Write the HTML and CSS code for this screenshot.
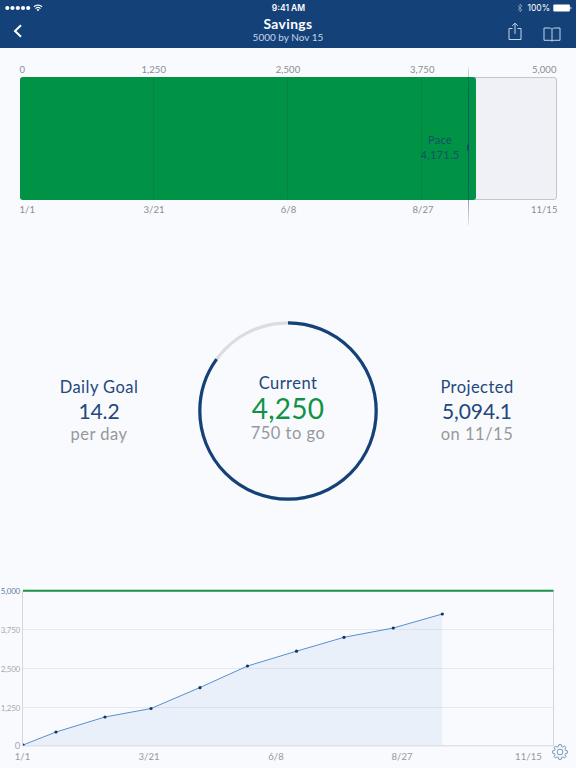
FILE: index.html
```html
<!DOCTYPE html>
<html lang="en">

<head>
    <meta charset="UTF-8">
    <meta name="viewport" content="width=device-width, initial-scale=1.0">
    <title>Savings</title>
    <link rel="stylesheet" href="styles.css">
</head>

<body>
    <header id="head">
        <div class="status">
            <svg class="signal" width="40" height="10" viewBox="0 0 40 10" fill="#fff">
                <circle cx="2.3" cy="5" r="2.1" />
                <circle cx="7.5" cy="5" r="2.1" />
                <circle cx="12.8" cy="5" r="2.1" />
                <circle cx="18" cy="5" r="2.1" />
                <circle cx="23.2" cy="5" r="2.1" />
                <g fill="none" stroke="#fff" stroke-width="1.2">
                    <path d="M28.9 3.8a6 6 0 0 1 8.2 0" />
                    <path d="M30.5 5.6a3.7 3.7 0 0 1 5 0" />
                </g>
                <path d="M31.6 6.7a2.1 2.1 0 0 1 2.8 0L33 8.2z" />
            </svg>
            <span class="time">9:41 AM</span>
            <div class="power">
                <svg width="6" height="10" viewBox="0 0 6 10" fill="none" stroke="#8ba3c2" stroke-width=".8">
                    <path d="M.8 2.8l4.2 4.3L3 9V1l2 1.9L.8 7.2" />
                </svg>
                <span>100%</span>
                <svg width="19" height="8" viewBox="0 0 19 8" fill="#fff">
                    <rect x=".3" y=".5" width="16.6" height="7" rx="1" />
                    <path d="M17.5 2.7q1.1.3 1.1 1.3t-1.1 1.3z" />
                </svg>
            </div>
        </div>
        <div class="nav">
            <svg class="back" width="10" height="14" viewBox="0 0 10 14" fill="none" stroke="#fff" stroke-width="2">
                <path d="M8 1.2L2 7l6 5.8" />
            </svg>
            <div class="title">
                <h1>Savings</h1>
                <p>5000 by Nov 15</p>
            </div>
            <div class="actions">
                <svg width="14" height="19" viewBox="0 0 14 19" fill="none" stroke="#c6d4e6" stroke-width="1">
                    <path d="M4.5 6.5H1v11h12v-11H9.5M7 12V1.2M4.2 3.9L7 1.1l2.8 2.8" />
                </svg>
                <svg width="18" height="15" viewBox="0 0 18 15" fill="none" stroke="#c6d4e6" stroke-width="1">
                    <path d="M9 2.3C8.5 1.3 7.5 1 6.3 1H1v12.3h5.8c1.2 0 1.8.2 2.2.9.4-.7 1-.9 2.2-.9H17V1h-5.3C10.5 1 9.500 1.300 9 2.300v12" />
                </svg>
            </div>
        </div>
    </header>

    <section class="progress">
        <div class="labels">
            <span>0</span><span>1,250</span><span>2,500</span><span>3,750</span><span>5,000</span>
        </div>
        <div class="bar">
            <div class="fill" style="width: 85.3%"></div>
            <div class="ticks"><i></i><i></i><i></i><i></i></div>
            <div class="pace">
                <p>Pace<br>4,171.5</p>
            </div>
        </div>
        <div class="labels dates">
            <span>1/1</span><span>3/21</span><span>6/8</span><span>8/27</span><span>11/15</span>
        </div>
    </section>

    <section class="stats">
        <div class="stat">
            <h2>Daily Goal</h2>
            <strong>14.2</strong>
            <p>per day</p>
        </div>
        <div class="ring">
            <svg width="180" height="180" viewBox="0 0 180 180" fill="none" stroke-width="3.2">
                <circle cx="90" cy="90" r="88.2" stroke="#dcdcde" />
                <circle cx="90" cy="90" r="88.2" stroke="#144178" pathLength="100" stroke-dasharray="85 15" transform="rotate(-90 90 90)" />
            </svg>
            <div class="stat current">
                <h2>Current</h2>
                <strong>4,250</strong>
                <p>750 to go</p>
            </div>
        </div>
        <div class="stat">
            <h2>Projected</h2>
            <strong>5,094.1</strong>
            <p>on 11/15</p>
        </div>
    </section>

    <section class="history">
        <svg width="576" height="188" viewBox="0 580 576 188">
            <path class="area" d="M23 745L56 732 105 717 151 708.5 200 687.5 247.5 666 296.5 651.2 344 637.3 393.3 628 442.3 614V745z" />
            <path class="grid" d="M23 629.5H553M23 668.5H553M23 707.5H553" />
            <path class="frame" d="M22.5 591V745.8H553.5V591" />
            <path class="goal" d="M23 590.8H553.5" />
            <path class="line" d="M23 745L56 732 105 717 151 708.5 200 687.5 247.5 666 296.5 651.2 344 637.3 393.3 628 442.3 614" />
            <g class="dots">
                <path d="M23 743.5a1.5 1.5 0 0 1 1.5 2H23z" />
                <circle cx="56" cy="732" r="1.6" />
                <circle cx="105" cy="717" r="1.6" />
                <circle cx="151" cy="708.5" r="1.6" />
                <circle cx="200" cy="687.7" r="1.6" />
                <circle cx="247.5" cy="666" r="1.6" />
                <circle cx="296.5" cy="651.2" r="1.6" />
                <circle cx="344" cy="637.3" r="1.6" />
                <circle cx="393.3" cy="628" r="1.6" />
                <circle cx="442.3" cy="614" r="1.6" />
            </g>
            <g class="y-axis">
                <text class="top" x="20" y="593.7">5,000</text>
                <text x="20" y="632.7">3,750</text>
                <text x="20" y="671.7">2,500</text>
                <text x="20" y="710.7">1,250</text>
                <text class="zero" x="20" y="749">0</text>
            </g>
            <g class="x-axis">
                <text x="22.5" y="760.3">1/1</text>
                <text x="149" y="760.3">3/21</text>
                <text x="276" y="760.3">6/8</text>
                <text x="402" y="760.3">8/27</text>
                <text x="528.5" y="760.3">11/15</text>
            </g>
            <g class="gear" transform="translate(560 752)">
                <circle r="2.9" />
                <path d="M-1.2 -7.3H1.2L1.7 -5.4 2.9 -4.9 4.6 -6 6 -4.6 4.9 -2.9 5.4 -1.7 7.3 -1.2V1.2L5.4 1.7 4.9 2.9 6 4.6 4.6 6 2.9 4.9 1.7 5.4 1.2 7.3H-1.2L-1.7 5.4 -2.9 4.9 -4.6 6 -6 4.6 -4.9 2.9 -5.4 1.7 -7.3 1.2V-1.2L-5.4 -1.7 -4.9 -2.9 -6 -4.6 -4.6 -6 -2.9 -4.9 -1.7 -5.4z" />
            </g>
        </svg>
    </section>
</body>

</html>
```
FILE: styles.css
```css
* {
    margin: 0;
    padding: 0;
    box-sizing: border-box;
}

body {
    width: 576px;
    height: 768px;
    display: flex;
    flex-direction: column;
    overflow: hidden;
    background-color: #f8fafe;
    font-family: Lato, "Liberation Sans", sans-serif;
    color: #24477c;
}

svg {
    display: block;
}

#head {
    height: 48px;
    background-color: #144178;
    color: #fff;
}

.status,
.nav {
    display: grid;
    grid-template-columns: 1fr 1fr 1fr;
    align-items: center;
}

.status {
    height: 16px;
    padding: 0 4px 0 5px;
    font: 500 8px/16px Inter, sans-serif;
}

.time {
    text-align: center;
    font-weight: 600;
    font-size: 8.5px;
}

.power {
    display: flex;
    justify-content: flex-end;
    align-items: center;
    gap: 4px;
    font-size: 8.5px;
    font-weight: 400;
}

.power span {
    margin-right: -1px;
}

.nav {
    height: 32px;
    padding: 0 14px;
}

.back {
    margin: 0 0 3px -1px;
}

.title {
    text-align: center;
}

.title h1 {
    font-size: 13.8px;
    line-height: 15px;
    letter-spacing: .4px;
}

.title p {
    font-size: 10px;
    line-height: 12px;
    color: #c6d4e6;
    margin-bottom: 5px;
}

.actions {
    display: flex;
    justify-content: flex-end;
    align-items: flex-end;
    gap: 22px;
    margin: 0 1px 1px 0;
}

.actions svg:first-child {
    margin: 0 -1px 1px 0;
}

/* goal bar */
.progress {
    width: 537px;
    margin: 14px 0 0 19.5px;
}

.labels {
    display: grid;
    grid-template-columns: 1fr 2fr 2fr 2fr 1fr;
    height: 15px;
    font-size: 9.5px;
    line-height: 15px;
    letter-spacing: .05px;
    text-align: center;
    color: #8b8d91;
}

.labels span:first-child {
    text-align: left;
}

.labels span:last-child {
    text-align: right;
}

.dates {
    margin: 2px -1px 0 0;
}

.bar {
    position: relative;
    height: 123px;
    border: 1px solid #c5c6ca;
    border-radius: 3px;
    background-color: #f0f1f6;
}

.fill {
    height: 123px;
    margin: -1px;
    border-radius: 3px;
    background-color: #009245;
}

.ticks {
    position: absolute;
    inset: 0 1px 0 -1px;
    display: grid;
    grid-template-columns: repeat(4, 1fr);
}

.ticks i + i {
    border-left: 1px solid #07843f;
}

.pace {
    position: absolute;
    top: -11px;
    right: 87px;
    width: 60px;
    height: 158px;
    padding: 65px 8px 0 0;
    text-align: center;
    font-size: 11px;
    line-height: 15px;
    letter-spacing: .3px;
    color: #14506a;
    background: linear-gradient(rgba(20, 65, 120, .1), rgba(20, 65, 120, .7) 20%, rgba(20, 65, 120, .7) 75%, rgba(20, 65, 120, .1)) right / 1px 100% no-repeat;
}

.pace p {
    margin-left: 11px;
    white-space: nowrap;
}

.pace::after {
    content: "";
    position: absolute;
    right: 0;
    top: 77px;
    width: 2px;
    height: 7px;
    border-radius: 2px 0 0 2px;
    background-color: #144178;
}

/* figures */
.stats {
    display: grid;
    grid-template-columns: 198px 180px 198px;
    align-items: center;
    margin-top: 104px;
}

.stat {
    text-align: center;
    padding-bottom: 3px;
}

.stat h2 {
    font-size: 16.5px;
    font-weight: 400;
    line-height: 22px;
    letter-spacing: .45px;
}

.stat strong {
    display: block;
    font-size: 21px;
    font-weight: 400;
    line-height: 26px;
    letter-spacing: -.1px;
}

.stat p {
    font-size: 16.5px;
    line-height: 20px;
    letter-spacing: .5px;
    color: #97989b;
}

.current {
    padding-bottom: 6px;
}

.ring {
    display: grid;
    align-items: center;
}

.ring > * {
    grid-area: 1 / 1;
}

.current h2 {
    line-height: 20px;
}

.current strong {
    font-size: 28px;
    line-height: 30px;
    color: #109347;
    letter-spacing: .2px;
}

/* history chart */
.history {
    margin-top: auto;
}

.area {
    fill: #e9f0fa;
}

.grid {
    stroke: #18304f;
    stroke-opacity: .08;
}

.frame {
    fill: none;
    stroke: #d5d6dc;
}

.goal {
    stroke: #189049;
    stroke-width: 2;
}

.line {
    fill: none;
    stroke: #5a8fce;
}

.dots {
    fill: #0f3468;
}

.y-axis {
    font-size: 8px;
    letter-spacing: -.25px;
    text-anchor: end;
    fill: #a8aaaf;
}

.y-axis .top {
    fill: #5f7ba5;
}

.y-axis .zero {
    font-size: 9.5px;
}

.x-axis {
    font-size: 9.5px;
    letter-spacing: .1px;
    text-anchor: middle;
    fill: #97989c;
}

.gear {
    fill: none;
    stroke: #7d93b7;
    stroke-linejoin: round;
}
```
